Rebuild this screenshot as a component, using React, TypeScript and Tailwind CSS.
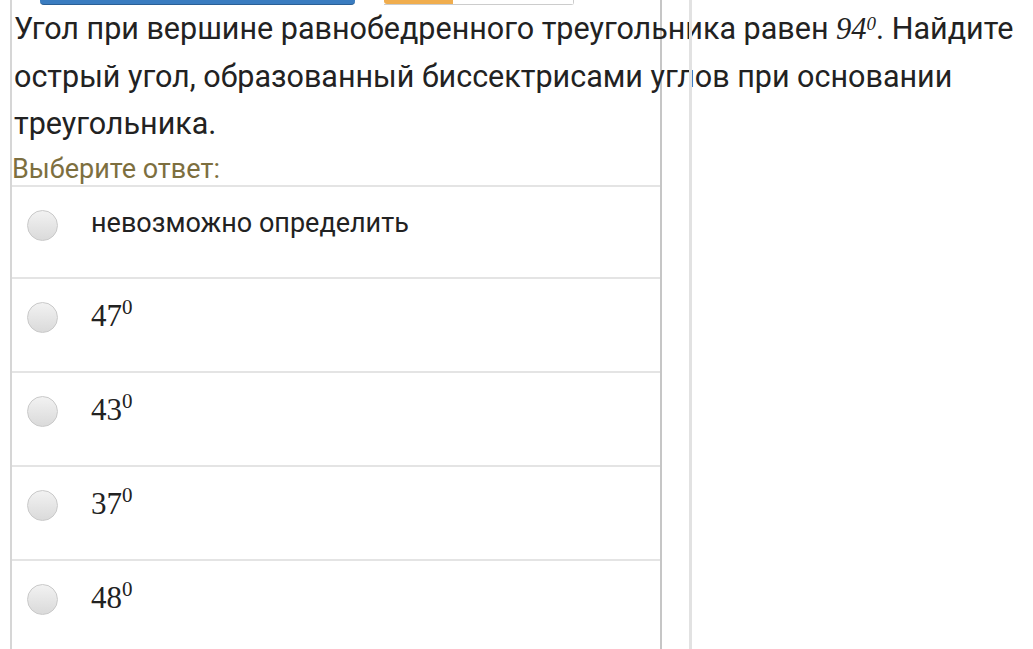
import React from 'react'

const answers: { label: string; math?: boolean }[] = [
  { label: 'невозможно определить' },
  { label: '47', math: true },
  { label: '43', math: true },
  { label: '37', math: true },
  { label: '48', math: true },
]

function Radio() {
  return (
    <div className="w-[31px] h-[31px] rounded-full border border-[#c9c9c9] bg-gradient-to-b from-[#f2f2f2] to-[#dadada]" />
  )
}

export default function App() {
  return (
    <div className="w-[1033px] h-[649px] overflow-hidden bg-white flex font-['Roboto',sans-serif]">
      {/* main column */}
      <div className="ml-[10px] w-[652px] shrink-0 h-full border-l-2 border-r-2 border-l-[#d6d6d6] border-r-[#c6c6c6] flex flex-col">
        {/* cut-off buttons */}
        <div className="flex h-[5px] shrink-0">
          <div className="ml-[28px] w-[315px] h-[5px] rounded-b-[4px] bg-[#3a7cc0] border-b border-[#2a5f96]" />
          <div className="ml-[29px] w-[190px] h-[5px] flex border-b border-r border-[#cccccc] rounded-br-[3px]">
            <div className="w-[69px] bg-[#f0ad4e] rounded-bl-[3px]" />
            <div className="flex-1 bg-white" />
          </div>
        </div>

        {/* question */}
        <p className="w-[1012px] pl-[2px] text-[30.5px] leading-[47px] text-[#222] whitespace-nowrap">
          Угол при вершине равнобедренного треугольника равен{' '}
          <i className="font-['Liberation_Serif',serif]">
            94<sup className="text-[19px]">0</sup>
          </i>
          . Найдите
          <br />
          острый угол, образованный биссектрисами углов при основании
          <br />
          треугольника.
        </p>
        <div className="text-[27px] leading-[32px] mt-[6px] text-[#7d6f3f]">Выберите ответ:</div>

        {/* answers */}
        <div className="flex flex-col">
          {answers.map((a, i) => (
            <div
              key={a.label}
              className={`${i === 0 ? 'h-[92px]' : 'h-[94px]'} shrink-0 border-t-2 border-[#e4e4e4] flex items-start pt-[23px]`}
            >
              <div className="ml-[15px] shrink-0">
                <Radio />
              </div>
              {a.math ? (
                <span className="ml-[33px] font-['Liberation_Serif',serif] text-[31px] leading-[32px] text-[#222] -mt-[2px]">
                  {a.label}
                  <sup className="text-[21px] -top-[0.55em]">0</sup>
                </span>
              ) : (
                <span className="ml-[33px] text-[27px] leading-[30px] text-[#222] -mt-[2px]">{a.label}</span>
              )}
            </div>
          ))}
        </div>
      </div>

      {/* second column edge */}
      <div className="ml-[27px] w-[3px] h-full bg-[#e2e2e2] shrink-0" />
    </div>
  )
}
